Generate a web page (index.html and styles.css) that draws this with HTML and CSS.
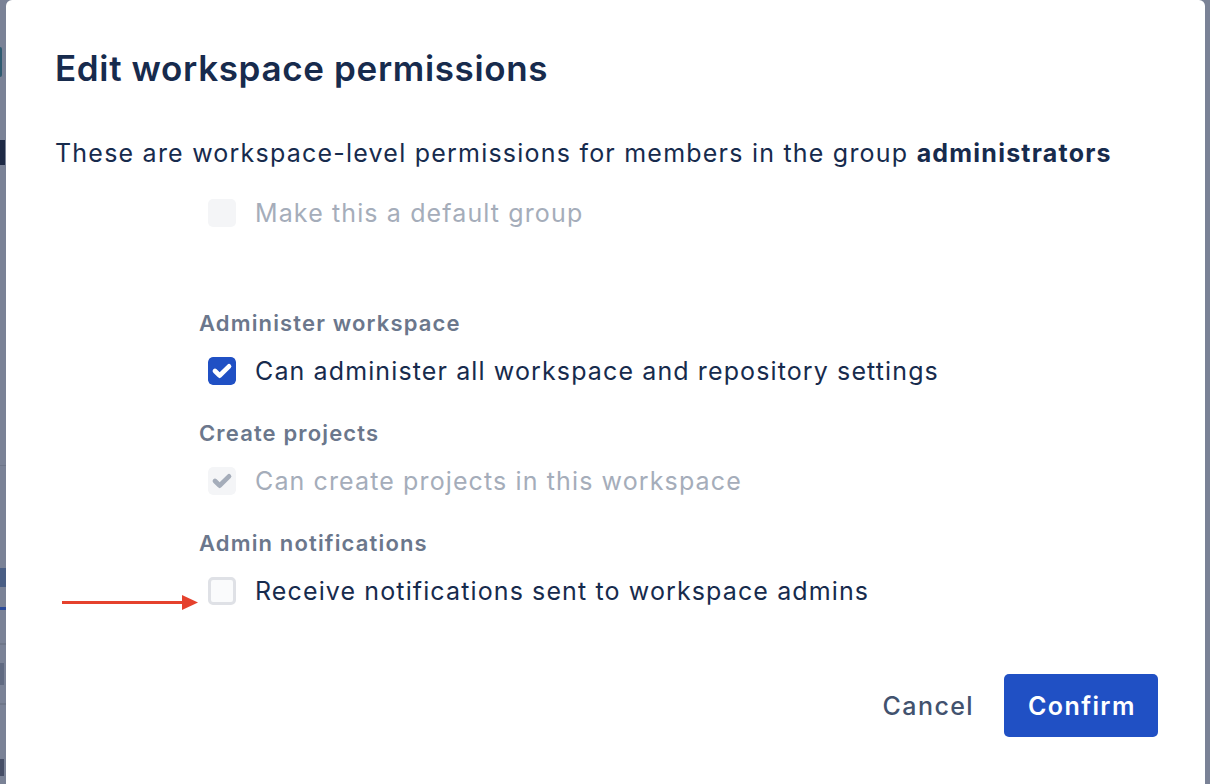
FILE: index.html
```html
<!DOCTYPE html>
<html lang="en">
<head>
<meta charset="utf-8">
<title>Edit workspace permissions</title>
<link rel="stylesheet" href="styles.css">
</head>
<body>
<div class="backdrop">
  <span class="frag frag-g"></span>
  <span class="frag frag-n"></span>
  <span class="frag frag-line1"></span>
  <span class="frag frag-ls"></span>
  <span class="frag frag-tab"></span>
  <span class="frag frag-line2"></span>
  <span class="frag frag-s"></span>
  <span class="frag frag-line3"></span>
  <span class="frag frag-a"></span>
</div>

<div class="modal" role="dialog">
  <h1 class="title">Edit workspace permissions</h1>
  <p class="desc">These are workspace-level permissions for members in the group <strong>administrators</strong></p>

  <div class="form">
    <label class="row row-default is-disabled">
      <span class="box box-disabled"></span>
      <span class="row-text">Make this a default group</span>
    </label>

    <div class="group group-first">
      <div class="group-label">Administer workspace</div>
      <label class="row">
        <svg class="box" viewBox="6 6 12 12" width="28" height="28"><rect x="6" y="6" width="12" height="12" rx="2" fill="#2050c4"/><path d="M9.707 11.293a1 1 0 1 0-1.414 1.414l2 2a1 1 0 0 0 1.414 0l4-4a1 1 0 1 0-1.414-1.414L11 12.586l-1.293-1.293z" fill="#ffffff"/></svg>
        <span class="row-text">Can administer all workspace and repository settings</span>
      </label>
    </div>

    <div class="group">
      <div class="group-label">Create projects</div>
      <label class="row is-disabled">
        <svg class="box" viewBox="6 6 12 12" width="28" height="28"><rect x="6" y="6" width="12" height="12" rx="2" fill="#f4f5f7"/><path d="M9.707 11.293a1 1 0 1 0-1.414 1.414l2 2a1 1 0 0 0 1.414 0l4-4a1 1 0 1 0-1.414-1.414L11 12.586l-1.293-1.293z" fill="#a5adba"/></svg>
        <span class="row-text">Can create projects in this workspace</span>
      </label>
    </div>

    <div class="group">
      <div class="group-label">Admin notifications</div>
      <label class="row">
        <span class="box box-empty"></span>
        <span class="row-text">Receive notifications sent to workspace admins</span>
      </label>
    </div>
  </div>

  <div class="footer">
    <button class="btn btn-cancel" type="button">Cancel</button>
    <button class="btn btn-confirm" type="button">Confirm</button>
  </div>
</div>

<svg class="arrow" width="140" height="25" viewBox="0 0 140 25">
  <line x1="2" y1="12.5" x2="126" y2="12.5" stroke="#e5412d" stroke-width="3"/>
  <polygon points="122,5 138,12.5 122,20" fill="#e5412d"/>
</svg>
</body>
</html>
```

FILE: styles.css
```css
* { box-sizing: border-box; }

html, body {
  margin: 0;
  padding: 0;
  width: 1210px;
  height: 784px;
  overflow: hidden;
}

body {
  background: #7a8296;
  font-family: Inter, "Noto Sans", "Liberation Sans", sans-serif;
  color: #172b4d;
}

.backdrop {
  position: absolute;
  inset: 0;
}

.frag {
  position: absolute;
  left: 0;
  display: block;
}
.frag-g { top: 47px; width: 2px; height: 30px; background: #2f5b70; border-radius: 0 2px 2px 0; }
.frag-n { top: 140px; width: 5px; height: 25px; background: #1e2a45; }
.frag-line1 { top: 465px; width: 6px; height: 1px; background: #6e7689; }
.frag-ls { top: 568px; width: 6px; height: 19px; background: #3f557f; opacity: 0.8; }
.frag-tab { top: 607px; width: 6px; height: 3px; background: #2a4a98; }
.frag-line2 { top: 643px; width: 6px; height: 2px; background: #6f7789; }
.frag-s { top: 663px; width: 4px; height: 22px; background: #566077; opacity: 0.7; }
.frag-line3 { top: 703px; width: 6px; height: 2px; background: #6f7789; }
.frag-a { top: 759px; width: 4px; height: 17px; background: #39415a; opacity: 0.8; }

.modal {
  position: absolute;
  left: 6px;
  right: 5px;
  top: 0;
  bottom: -20px;
  background: #ffffff;
  border-radius: 6px;
  padding: 47px 47px 0 49px;
  display: flex;
  flex-direction: column;
}

.title {
  margin: 0;
  font-size: 35px;
  line-height: 42px;
  font-weight: 600;
  color: #172b4d;
  letter-spacing: 0.65px;
}

.desc {
  margin: 47px 0 0;
  font-size: 25px;
  line-height: 35px;
  font-weight: 400;
  color: #172b4d;
  letter-spacing: 1.22px;
}

.desc strong {
  font-weight: 700;
}

.form {
  margin-left: 144px;
  margin-top: 21px;
  display: flex;
  flex-direction: column;
}

.group {
  display: flex;
  flex-direction: column;
  gap: 13px;
  margin-top: 27px;
}

.group-first {
  margin-top: 75px;
}

.group-label {
  font-size: 22px;
  line-height: 28px;
  font-weight: 600;
  color: #6b778c;
  letter-spacing: 1.15px;
}

.row {
  display: flex;
  align-items: center;
  height: 42px;
  padding-left: 9px;
  gap: 19px;
  font-size: 25px;
  color: #172b4d;
  letter-spacing: 1.12px;
}

.row.is-disabled .row-text {
  color: #a5adba;
}

.box {
  width: 28px;
  height: 28px;
  flex: none;
  display: block;
  border-radius: 5px;
}

.box-disabled {
  background: #f4f5f7;
}

.box-empty {
  background: #fafbfc;
  border: 3px solid #dfe1e6;
}

.footer {
  margin-top: 62px;
  display: flex;
  justify-content: flex-end;
  gap: 14px;
}

.btn {
  height: 63px;
  border: none;
  border-radius: 5px;
  font-family: inherit;
  font-size: 25px;
  font-weight: 500;
  letter-spacing: 1.4px;
  padding: 0 24px;
  cursor: pointer;
}

.btn-cancel {
  background: transparent;
  color: #42526e;
  padding: 0 16px;
}

.btn-confirm {
  background: #2050c4;
  color: #ffffff;
  width: 154px;
  font-weight: 600;
}

.arrow {
  position: absolute;
  left: 60px;
  top: 590px;
}
```
